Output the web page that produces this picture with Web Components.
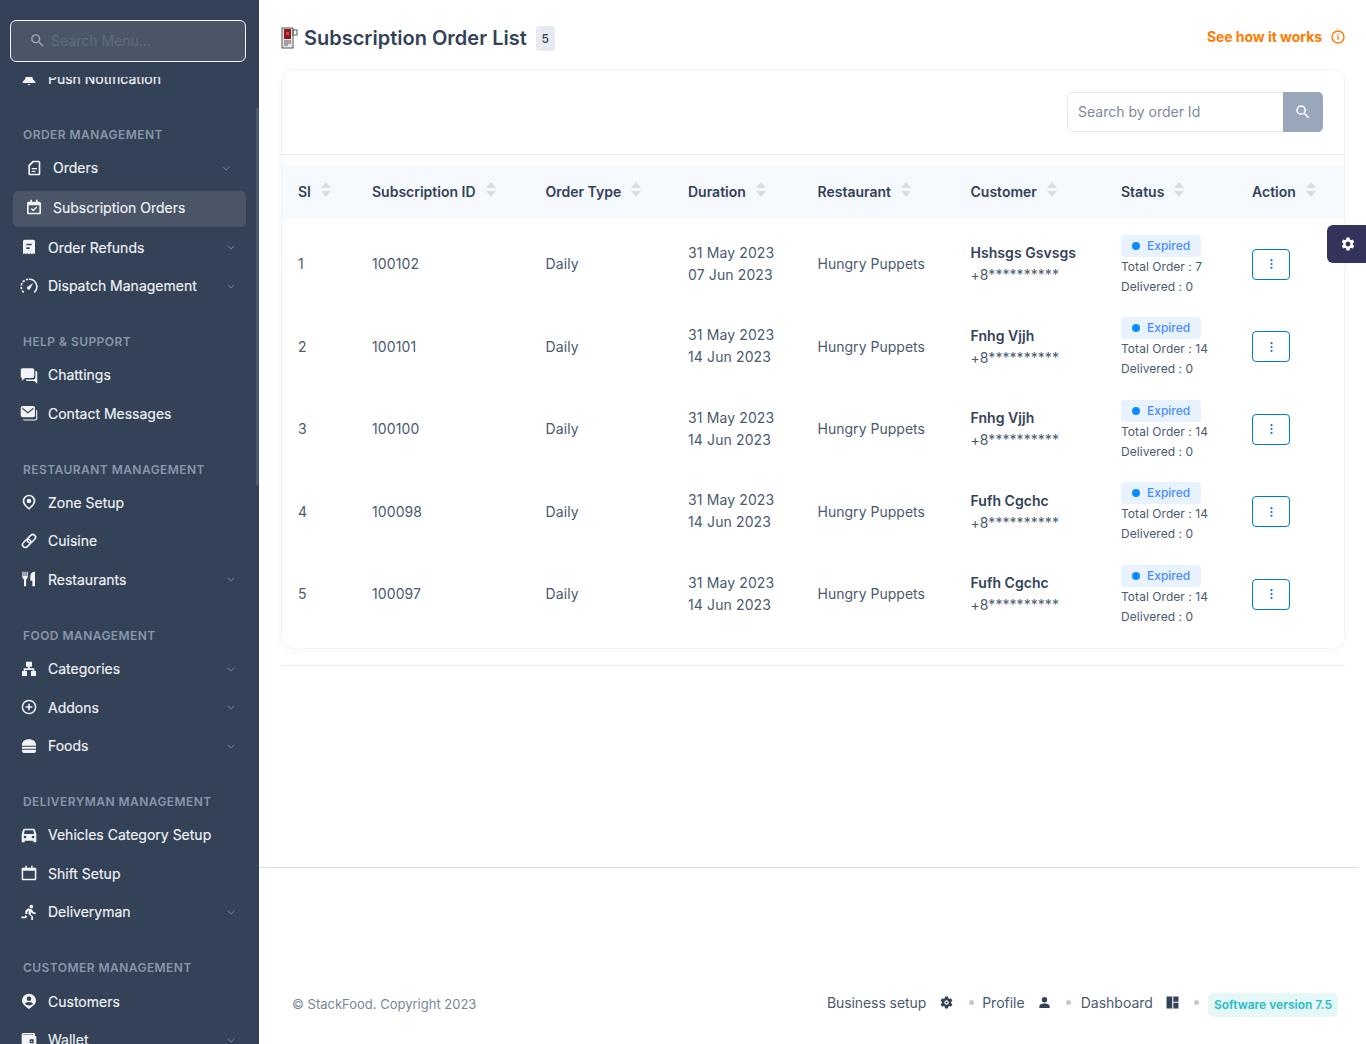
<!DOCTYPE html>
<html>
<head>
<meta charset="utf-8">
<title>Subscription Order List</title>
<style>
html,body{margin:0;padding:0;height:100%;overflow:hidden;background:#fff}
body{font-family:Inter,"Liberation Sans",sans-serif;color:#334257}
</style>
</head>
<body>
<admin-app>
	<side-nav slot="nav">
		<nav-item icon="bell">Push Notification</nav-item>
		<nav-label>Order Management</nav-label>
		<nav-item icon="orders" sub more>Orders</nav-item>
		<nav-item icon="calcheck" sub active>Subscription Orders</nav-item>
		<nav-item icon="refund" more>Order Refunds</nav-item>
		<nav-item icon="dash" big more>Dispatch Management</nav-item>
		<nav-label>Help &amp; Support</nav-label>
		<nav-item icon="chat" big>Chattings</nav-item>
		<nav-item icon="mail" big>Contact Messages</nav-item>
		<nav-label>Restaurant Management</nav-label>
		<nav-item icon="pin">Zone Setup</nav-item>
		<nav-item icon="link">Cuisine</nav-item>
		<nav-item icon="fork" more>Restaurants</nav-item>
		<nav-label>Food Management</nav-label>
		<nav-item icon="tree" more>Categories</nav-item>
		<nav-item icon="plus" more>Addons</nav-item>
		<nav-item icon="burger" more>Foods</nav-item>
		<nav-label>Deliveryman Management</nav-label>
		<nav-item icon="car">Vehicles Category Setup</nav-item>
		<nav-item icon="cal">Shift Setup</nav-item>
		<nav-item icon="run" more>Deliveryman</nav-item>
		<nav-label>Customer Management</nav-label>
		<nav-item icon="custpin">Customers</nav-item>
		<nav-item icon="wallet" more>Wallet</nav-item>
	</side-nav>

	<page-head count="5">Subscription Order List</page-head>

	<order-card>
		<order-row si="1" sid="100102" from="31 May 2023" to="07 Jun 2023" name="Hshsgs Gsvsgs" total="7"></order-row>
		<order-row si="2" sid="100101" from="31 May 2023" to="14 Jun 2023" name="Fnhg Vjjh" total="14"></order-row>
		<order-row si="3" sid="100100" from="31 May 2023" to="14 Jun 2023" name="Fnhg Vjjh" total="14"></order-row>
		<order-row si="4" sid="100098" from="31 May 2023" to="14 Jun 2023" name="Fufh Cgchc" total="14"></order-row>
		<order-row si="5" sid="100097" from="31 May 2023" to="14 Jun 2023" name="Fufh Cgchc" total="14"></order-row>
	</order-card>

	<page-foot slot="foot"></page-foot>
	<settings-tab slot="over"></settings-tab>
</admin-app>

<script>
// icons, all on a 24 box and filled with currentColor
const GEAR = '<path d="M19.14 12.94c.04-.3.06-.61.06-.94 0-.32-.02-.64-.07-.94l2.03-1.58a.49.49 0 0 0 .12-.61l-1.92-3.32a.488.488 0 0 0-.59-.22l-2.39.96c-.5-.38-1.03-.7-1.62-.94l-.36-2.54a.484.484 0 0 0-.48-.41h-3.84c-.24 0-.43.17-.47.41l-.36 2.54c-.59.24-1.13.57-1.62.94l-2.39-.96c-.22-.08-.47 0-.59.22L2.74 8.87c-.12.21-.08.47.12.61l2.03 1.58c-.05.3-.09.63-.09.94s.02.64.07.94l-2.03 1.58a.49.49 0 0 0-.12.61l1.92 3.32c.12.22.37.29.59.22l2.39-.96c.5.38 1.03.7 1.62.94l.36 2.54c.05.24.24.41.48.41h3.84c.24 0 .44-.17.47-.41l.36-2.54c.59-.24 1.13-.56 1.62-.94l2.39.96c.22.08.47 0 .59-.22l1.92-3.32c.12-.22.07-.47-.12-.61l-2.01-1.58zM12 15.6c-1.98 0-3.6-1.62-3.6-3.6s1.62-3.6 3.6-3.6 3.6 1.62 3.6 3.6-1.62 3.6-3.6 3.6z"/>';
const ICONS = {
	search:'<path d="M15.5 14h-.79l-.28-.27A6.47 6.47 0 0 0 16 9.5 6.5 6.5 0 1 0 9.5 16c1.61 0 3.09-.59 4.23-1.57l.27.28v.79l5 4.99L20.49 19l-4.99-5zm-6 0C7.01 14 5 11.99 5 9.5S7.01 5 9.5 5 14 7.01 14 9.5 11.99 14 9.5 14z"/>',
	bell:'<path d="M12 23c1.1 0 2-.6 2-1.5h-4c0 .9.9 1.5 2 1.5zM5 15c1.4-1 1.6-3 1.8-5 .3-3 2.3-4.6 4-5V3.5c0-.7.5-1.2 1.2-1.2s1.2.5 1.2 1.2V5c1.7.4 3.7 2 4 5 .2 2 .4 4 1.8 5l2.5 2.5v2H2.5v-2z"/>',
	orders:'<path fill-rule="evenodd" d="M10 1h9c1.4 0 2.5 1.1 2.5 2.5v17c0 1.4-1.100 2.500-2.500 2.500H6c-1.400 0-2.500-1.100-2.500-2.500V7.500zM11.500 3.500 6 9v11.500h13v-17zM8.500 12h8v2h-8zM8.500 16h5.500v2H8.500z"/>',
	calcheck:'<path fill-rule="evenodd" d="M6.500 1h2.500v3h6V1h2.500v3H20c1.400 0 2.500 1.100 2.500 2.500v14c0 1.400-1.100 2.500-2.500 2.500H4c-1.400 0-2.500-1.100-2.500-2.500v-14C1.500 5.100 2.600 4 4 4h2.500zM4 9.500v11h16v-11zM10.800 18.800l-3.800-3.800 1.500-1.500 2.300 2.300 4.700-4.700 1.500 1.500z"/>',
	refund:'<path fill-rule="evenodd" d="M5.500 1h13c1.400 0 2.500 1.100 2.500 2.500V23l-2.200-1.500-2.200 1.500-2.300-1.500-2.300 1.500-2.300-1.500-2.300 1.500-2.200-1.500L3 23V3.500C3 2.100 4.100 1 5.500 1zM8 7v2.400h8V7zM8 12.500v2.400h5v-2.400z"/>',
	dash:'<path fill="none" stroke="currentColor" stroke-width="2.200" stroke-dasharray="3.200 1.800" d="M5 20.500A10 10 0 0 1 12 3"/><path fill="none" stroke="currentColor" stroke-width="2.200" d="M12 3a10 10 0 0 1 7 17.500"/><path d="M17.500 8 13.800 15.200a2.300 2.300 0 1 1-2.500-2.900z"/>',
	chat:'<path d="M3.500 3h13C18 3 19 4 19 5.500v8c0 1.500-1 2.500-2.500 2.500H7l-4.500 3.500V16C1.500 15.700 1 14.700 1 13.500v-8C1 4 2 3 3.500 3z"/><path d="M20.500 6.500c1.500 0 2.500.8 2.500 2.200v14.800L19 20H10c-1.400 0-2.400-.8-2.500-2h10c1.800 0 3-1.200 3-3z"/>',
	mail:'<path fill-rule="evenodd" d="M3.500 2.500h14C19 2.500 20 3.500 20 5v10c0 1.500-1 2.500-2.500 2.500h-14C2 17.500 1 16.500 1 15V5c0-1.500 1-2.500 2.500-2.500zM3 4.500l7.500 6 7.500-6v2l-7.500 6-7.500-6z"/><path d="M21.500 7.500 23 8.500V19c0 1.800-1.200 3-3 3H6c-1.200 0-2-.6-2.300-1.500H20c.9 0 1.500-.6 1.500-1.500z"/>',
	pin:'<path fill-rule="evenodd" d="M12 1a9.500 9.500 0 0 1 9.500 9.500c0 5.200-5.800 10.500-9.500 13-3.700-2.500-9.500-7.800-9.500-13A9.500 9.500 0 0 1 12 1zm0 2.500a7 7 0 0 0-7 7c0 3.700 4 7.700 7 10 3-2.300 7-6.300 7-10a7 7 0 0 0-7-7zm0 3.500a3.500 3.500 0 1 1 0 7 3.500 3.500 0 0 1 0-7z"/>',
	link:'<g transform="rotate(-45 12 12)" fill="none" stroke="currentColor" stroke-width="2.400"><rect x="0" y="7.800" width="14" height="8.400" rx="4.200"/><rect x="10" y="7.800" width="14" height="8.400" rx="4.200"/></g>',
	fork:'<path d="M2 1h1.800v6.500h1.400V1H7v6.500h1.400V1h1.800v8c0 1.800-1 3-2.500 3.400V23H4.500V12.400C3 12 2 10.800 2 9zM21 1v22h-4V14.500h-3V7c0-3 2.500-6 7-6z"/>',
	tree:'<path d="M7.500 1h9v7.500h-3.200V11H20v4h2.500v7.500H15V15h2.500v-1.500h-11V15H9v7.500H1.500V15H4v-4h6.700V8.500H7.500z"/>',
	plus:'<path fill-rule="evenodd" d="M12 1a11 11 0 1 1 0 22 11 11 0 0 1 0-22zm0 2.200a8.800 8.800 0 1 0 0 17.600 8.800 8.800 0 0 0 0-17.600zM10.800 7h2.400v3.800H17v2.400h-3.800V17h-2.400v-3.800H7v-2.400h3.800z"/>',
	burger:'<path d="M12 2c6.500 0 10.500 3.500 10.500 8.500v1h-21v-1C1.500 5.500 5.500 2 12 2zM1.500 13h21v3h-21zM1.500 17.500h21V19c0 2-1.500 3.500-3.500 3.500H5c-2 0-3.500-1.500-3.500-3.500z"/>',
	car:'<path fill-rule="evenodd" d="M5.500 2.500h13c1.200 0 2.300.8 2.700 2l1.800 6.500v12h-4.500V20.500H5.500V23H1V11l1.800-6.500c.4-1.200 1.500-2 2.700-2zM5.700 5 4.300 10.500h15.400L18.300 5zM6 13a2 2 0 1 0 0 4 2 2 0 0 0 0-4zm12 0a2 2 0 1 0 0 4 2 2 0 0 0 0-4z"/>',
	cal:'<path fill-rule="evenodd" d="M6.500 1h2.300v3h6.400V1h2.300v3H21c1.200 0 2 .8 2 2v15c0 1.200-.8 2-2 2H3c-1.200 0-2-.8-2-2V6c0-1.200.8-2 2-2h3.500zM3.300 8.500v12.200h17.400V8.500z"/>',
	run:'<path d="M15.500 1a2.800 2.800 0 1 1 0 5.600 2.800 2.800 0 0 1 0-5.600zM10.500 6.500l5 1.500c1 .3 1.500 1 2 1.800l1 2.200 3.500.8v2.500l-5-1.100-1.200-2.200-1.300 3.600 3.500 3V24h-2.600v-5.500l-4.200-3.200.6-4.800-2.300 1.100V15H6.500V10zM7 16.500l2.200 1.800-1.700 3H.5v-2.600h5.200z"/>',
	custpin:'<path fill-rule="evenodd" d="M12 1a10.500 10.500 0 0 1 10.500 10.500c0 5-5 8-10.500 12.500C6.500 19.500 1.500 16.500 1.500 11.500A10.500 10.500 0 0 1 12 1zm0 4.200a3.400 3.400 0 1 0 0 6.800 3.400 3.400 0 0 0 0-6.800zm0 8.300c-3 0-5.800 1.200-5.800 2.800 1.500 1.400 3.600 2.400 5.800 2.400s4.300-1 5.800-2.400c0-1.600-2.800-2.800-5.800-2.800z"/>',
	wallet:'<path fill-rule="evenodd" d="M4 1.500h15c1.100 0 2 .9 2 2v2.500h1c.6 0 1 .4 1 1v15.500H1V4.500c0-1.700 1.300-3 3-3zm0 2.200c-.5 0-.9.300-.9.800h15.700v-.8zM13 11v6h6v-6zm2.200 2h1.600v2h-1.600z"/>',
	gear:GEAR,
	hexgear:GEAR + '<circle cx="12" cy="12" r="1.600"/>',
	person:'<path d="M12 2a5 5 0 1 1 0 10 5 5 0 0 1 0-10zM2.500 22v-3c0-3.500 5-5 9.500-5s9.500 1.500 9.500 5v3z"/>',
	panels:'<path d="M1 1h10.500v22H1zM13.500 1H23v9.500h-9.500zM13.500 12.500H23V23h-9.500z"/>',
	chev:'<path d="M4.700 8.300 12 15.600l7.300-7.300 1.100 1.100L12 17.800 3.600 9.400z"/>'
};

function svg(name, size) {
	return `<svg width="${size}" height="${size}" viewBox="0 0 24 24" fill="currentColor" aria-hidden="true">${ICONS[name]}</svg>`;
}

class AdminApp extends HTMLElement {
	constructor() {
		super();
		this.attachShadow({mode:'open'}).innerHTML = `
		<style>
		:host{display:flex;height:1044px;width:1366px;position:relative;overflow:hidden}
		.side{flex:0 0 259px;width:259px}
		.main{flex:1;min-width:0;display:flex;flex-direction:column}
		.page{padding:0 21px 0 22px}
		.rule{height:1px;background:#e7eaf3;margin-top:16px}
		</style>
		<div class="side"><slot name="nav"></slot></div>
		<div class="main">
			<div class="page"><slot></slot><div class="rule"></div></div>
			<slot name="foot"></slot>
		</div>
		<slot name="over"></slot>`;
	}
}

class SideNav extends HTMLElement {
	constructor() {
		super();
		this.attachShadow({mode:'open'}).innerHTML = `
		<style>
		:host{display:block;position:relative;height:1044px;background:#334257;overflow:hidden}
		.list{padding-top:59px}
		.top{position:absolute;left:0;top:0;right:3px;height:76.5px;background:#334257;z-index:2}
		.search{position:absolute;left:10px;top:20px;height:38px;width:216px;padding:0 0 2px 18px;border:1px solid #f2f4f7;border-radius:6px;
			background:#4a5567;display:flex;align-items:center;gap:5px;font-size:14px;color:#5f6d81}
		.search svg{color:#99a7ba;flex:none}
		.bar{position:absolute;right:0;top:108px;width:3px;height:377px;background:#4c5a6e;z-index:3}
		</style>
		<div class="top"><div class="search">${svg('search',17)}<span>Search Menu...</span></div></div>
		<div class="bar"></div>
		<div class="list"><slot></slot></div>`;
	}
}

class NavLabel extends HTMLElement {
	constructor() {
		super();
		this.attachShadow({mode:'open'}).innerHTML = `
		<style>
		:host{display:block;height:50.7px;box-sizing:border-box;padding:29.25px 0 0 23px;font-size:12px;line-height:16px;
			font-weight:600;letter-spacing:.45px;color:#8996a9;text-transform:uppercase;white-space:nowrap}
		</style><slot></slot>`;
	}
}

class NavItem extends HTMLElement {
	constructor() {
		super();
		const icon = this.getAttribute('icon');
		const size = this.hasAttribute('big') ? 18 : 16;
		this.attachShadow({mode:'open'}).innerHTML = `
		<style>
		:host{display:block;height:38.5px;font-size:14px;font-weight:400;color:#f1f3f6;white-space:nowrap;-webkit-text-stroke:.15px #f1f3f6}
		:host([sub]){height:39.825px}
		.row{height:100%;box-sizing:border-box;display:flex;align-items:center;padding:0 23px 0 21px;position:relative}
		:host([sub]) .row{padding:0 28px 1px 26px}
		.ic{flex:0 0 16px;min-width:0;width:16px;display:flex;margin-right:11px;justify-content:center}
		.ic svg{flex:none}
		.tx{flex:1}
		.chev{color:#7e8b9e;display:flex}
		.on{position:absolute;left:13px;right:13px;top:3px;bottom:.8px;background:#4a5567;border-radius:5px}
		.ic,.tx,.chev{position:relative}
		</style>
		<div class="row">
			${this.hasAttribute('active') ? '<div class="on"></div>' : ''}
			<span class="ic">${svg(icon,size)}</span>
			<span class="tx"><slot></slot></span>
			${this.hasAttribute('more') ? `<span class="chev">${svg('chev',10)}</span>` : ''}
		</div>`;
	}
}

class PageHead extends HTMLElement {
	constructor() {
		super();
		this.attachShadow({mode:'open'}).innerHTML = `
		<style>
		:host{display:flex;align-items:center;height:50px;padding-top:13px;box-sizing:content-box;margin-bottom:6px}
		.ic{flex:none;margin-right:5px;display:flex}
		h1{margin:0;font-size:20px;line-height:26px;font-weight:600;color:#334257}
		.n{margin-left:9px;min-width:19px;height:25px;border-radius:4px;background:#e7eaf0;font-size:12px;color:#334257;
			display:flex;align-items:center;justify-content:center;font-weight:500}
		.how{margin-left:auto;display:flex;align-items:center;gap:9px;font-size:14px;font-weight:700;letter-spacing:-.05px;color:#ff7a00;margin-top:-3px}
		</style>
		<span class="ic">
			<svg width="18" height="22" viewBox="0 0 18 22">
				<rect x="1" y="1" width="11" height="20" fill="#e8e8e8" stroke="#55565a"/>
				<rect x="3" y="2" width="7" height="10" fill="#8c1c1c"/>
				<rect x="5" y="5" width="3" height="3" fill="#e0403a"/>
				<rect x="12" y="3" width="4" height="5" fill="none" stroke="#55565a"/>
				<path d="M3 14h7M3 16h7M3 18h4" stroke="#55565a"/>
			</svg>
		</span>
		<h1><slot></slot></h1>
		<span class="n">${this.getAttribute('count')}</span>
		<span class="how">See how it works
			<svg width="14" height="14" viewBox="0 0 14 14" fill="none" stroke="currentColor" stroke-width="1.400"><circle cx="7" cy="7" r="6"/><path d="M7 6.200v3.600M7 4v1.200"/></svg>
		</span>`;
	}
}

class OrderCard extends HTMLElement {
	constructor() {
		super();
		const cols = ['SI','Subscription ID','Order Type','Duration','Restaurant','Customer','Status','Action'];
		const head = cols.map(c => `<div class="th">${c}<svg width="10" height="15" viewBox="0 0 10 15" fill="#d7dce6"><path d="M5 0 10 6H0zM5 15 0 9h10z"/></svg></div>`).join('');
		this.attachShadow({mode:'open'}).innerHTML = `
		<style>
		:host{display:block;background:#fff;border:1px solid #f2f3f6;border-radius:12px;box-shadow:0 4px 10px rgba(51,66,87,.03);padding-bottom:12.5px;
			--cols:74px 173.5px 142.500px 129.500px 153px 150.500px 131px 1fr}
		.bar{display:flex;justify-content:flex-end;padding:22px 21px 22px 0;border-bottom:1px solid #e7eaf3;margin-bottom:10px}
		.find{display:flex;width:256px;height:40px;box-sizing:border-box}
		.fld{flex:1;border:1px solid #e7eaf3;border-right:0;border-radius:5px 0 0 5px;display:flex;align-items:center;padding:0 0 1px 10px;font-size:14px;color:#7f8a9b}
		.btn{flex:0 0 40px;background:#99a7ba;color:#fff;border-radius:0 5px 5px 0;display:flex;align-items:center;justify-content:center}
		.head{display:grid;grid-template-columns:var(--cols);height:54px;align-items:center;background:#f6f9fe;padding-left:16px}
		.th{display:flex;align-items:center;gap:10px;font-size:14px;font-weight:600;color:#334257;white-space:nowrap;padding-bottom:1px}
		.th svg{position:relative;top:-2px}
		.body{padding-top:3.5px}
		</style>
		<div class="bar"><div class="find"><div class="fld">Search by order Id</div><div class="btn">${svg('search',18)}</div></div></div>
		<div class="head">${head}</div>
		<div class="body"><slot></slot></div>`;
	}
}

class OrderRow extends HTMLElement {
	constructor() {
		super();
		const a = n => this.getAttribute(n);
		this.attachShadow({mode:'open'}).innerHTML = `
		<style>
		:host{display:grid;grid-template-columns:var(--cols);height:82.5px;align-items:center;padding-left:16px;font-size:14px;letter-spacing:.1px;color:#4b5a6f}
		.two{line-height:22px;letter-spacing:.12px}
		.rest{letter-spacing:.02px}
		.name{font-weight:600;color:#334257;letter-spacing:.05px;line-height:21px;margin-bottom:1px}
		.ph{line-height:21px;letter-spacing:.05px}
		.stat{font-size:12px;line-height:20px;padding-top:4px;letter-spacing:.05px}
		.tag{display:inline-flex;align-items:center;gap:7px;height:22px;padding:0 11px 0 11px;border-radius:4px;background:#e8f3ff;color:#4a8cff;font-weight:500;letter-spacing:0;vertical-align:top}
		.tag i{width:8px;height:8px;border-radius:50%;background:#0a8cff}
		.act{width:38px;height:31px;margin-top:1px;box-sizing:border-box;border:1px solid #0177cd;border-radius:4px;display:flex;align-items:center;justify-content:center}
		</style>
		<div>${a('si')}</div>
		<div>${a('sid')}</div>
		<div>Daily</div>
		<div class="two">${a('from')}<br>${a('to')}</div>
		<div class="rest">Hungry Puppets</div>
		<div><div class="name">${a('name')}</div><div class="ph">+8**********</div></div>
		<div class="stat"><div class="tag"><i></i>Expired</div><div>Total Order : ${a('total')}</div><div>Delivered : 0</div></div>
		<div><div class="act"><svg width="3" height="10" viewBox="0 0 3 10" fill="#0177cd"><circle cx="1.500" cy="1.200" r="1.100"/><circle cx="1.500" cy="5" r="1.100"/><circle cx="1.500" cy="8.800" r="1.100"/></svg></div></div>`;
	}
}

class PageFoot extends HTMLElement {
	constructor() {
		super();
		const dot = '<i class="dot"></i>';
		this.attachShadow({mode:'open'}).innerHTML = `
		<style>
		:host{display:block;margin-top:201px;margin-right:8px;border-top:1px solid #d8dde5;height:176px;box-sizing:border-box;position:relative}
		.wrap{display:flex;align-items:center;padding:0 20px 0 33px;height:40px;margin-top:116px}
		.c{font-size:13px;color:#7a8698}
		.r{margin-left:auto;display:flex;align-items:center;font-size:14px;color:#4b5a6f;position:relative;top:-1px}
		.r svg{color:#334257;margin-left:13px;flex:none}
		.dot{width:5px;height:5px;border-radius:50%;background:#c3cad5;margin:0 10px 0 15px}
		.dot.first{margin-right:8px}
		.bs{letter-spacing:-.08px}
		.v{background:#e6f7f8;color:#27bdc9;font-size:12px;font-weight:600;border-radius:5px;padding:0 6px;height:24px;display:flex;align-items:center;position:relative;top:2px;margin-left:-1px}
		</style>
		<div class="wrap">
			<span class="c">© StackFood. Copyright 2023</span>
			<div class="r">
				<span class="bs">Business setup</span>${svg('hexgear',15)}<i class="dot first"></i>
				<span>Profile</span>${svg('person',13)}${dot}
				<span>Dashboard</span>${svg('panels',13)}${dot}
				<span class="v">Software version 7.5</span>
			</div>
		</div>`;
	}
}

class SettingsTab extends HTMLElement {
	constructor() {
		super();
		this.attachShadow({mode:'open'}).innerHTML = `
		<style>
		:host{position:absolute;right:0;top:225px;width:37px;height:38px;padding-left:2px;background:#33335c;color:#fff;border-radius:6px 0 0 6px;display:flex;align-items:center;justify-content:center}
		</style>${svg('gear',16)}`;
	}
}

customElements.define('admin-app', AdminApp);
customElements.define('side-nav', SideNav);
customElements.define('nav-label', NavLabel);
customElements.define('nav-item', NavItem);
customElements.define('page-head', PageHead);
customElements.define('order-card', OrderCard);
customElements.define('order-row', OrderRow);
customElements.define('page-foot', PageFoot);
customElements.define('settings-tab', SettingsTab);
</script>
</body>
</html>
